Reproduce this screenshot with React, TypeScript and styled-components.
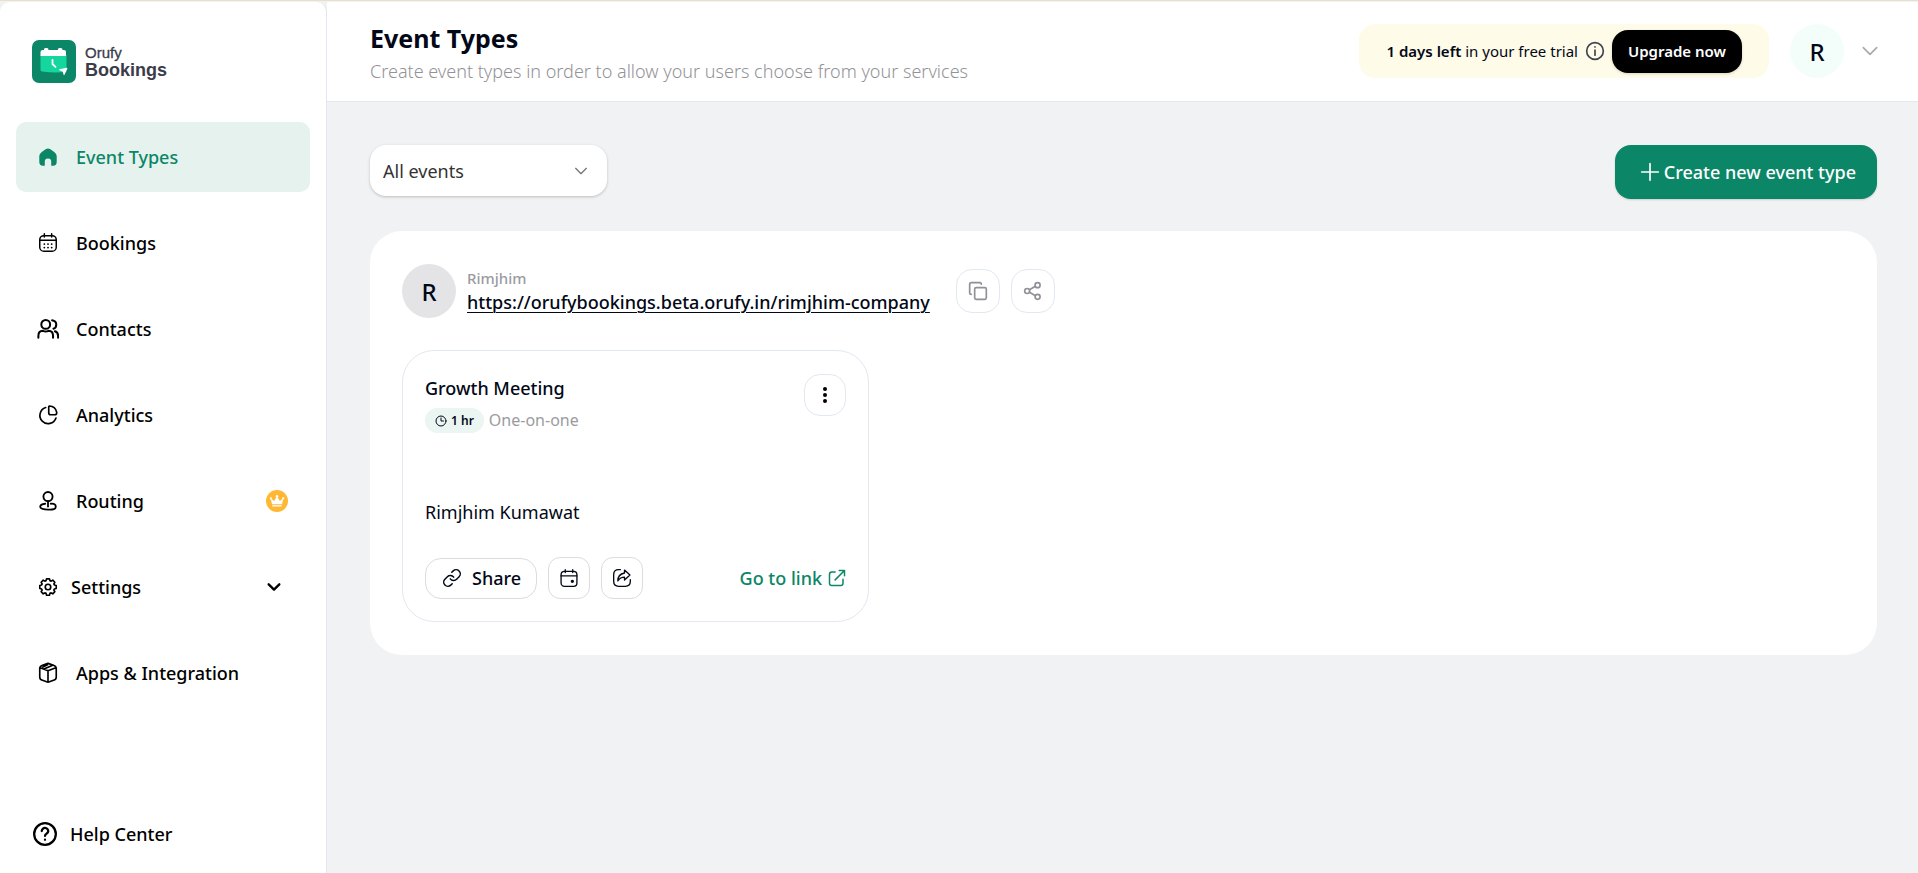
import React from "react";
import styled, { createGlobalStyle, css } from "styled-components";

const GlobalStyle = createGlobalStyle`
  *, *::before, *::after { box-sizing: border-box; }
  body {
    margin: 0;
    background: #f1f2f4;
    color: #020817;
    font-family: "Noto Sans", "Open Sans", sans-serif;
  }
  button, select { font: inherit; color: inherit; cursor: pointer; }
  a { color: inherit; text-decoration: none; }
  h1, h2, p, ul { margin: 0; padding: 0; font-weight: inherit; }
  svg { display: block; flex: none; }
`;

const Page = styled.div`
  display: grid;
  grid-template-columns: 327px minmax(0, 1fr);
  min-height: 100vh;
  border-top: 1px solid #e8e0c9;
`;

const Sidebar = styled.aside`
  display: flex;
  flex-direction: column;
  margin-top: 1px;
  padding: 38px 16px 19px;
  background: #fff;
  border-right: 1px solid #e2e8f0;
  border-radius: 10px 10px 0 0;
`;

const Brand = styled.a`
  display: flex;
  align-items: center;
  gap: 9px;
  height: 44px;
  margin: 0 16px 38px;
  color: #3b3c4a;
  font-family: "Liberation Sans", Arial, sans-serif;
`;

const BrandText = styled.span`
  display: flex;
  flex-direction: column;
  font-size: 15px;
  line-height: 17px;
  padding-bottom: 1px;
  -webkit-text-stroke: 0.3px currentColor;

  strong { font-size: 18px; line-height: 18px; font-weight: 700; -webkit-text-stroke: 0; }
`;

const NavList = styled.ul`
  display: flex;
  flex-direction: column;
  gap: 16px;
  list-style: none;
`;

const navItem = css`
  display: flex;
  align-items: center;
  width: 100%;
  border: 0;
  background: none;
  color: #000;
  font-size: 18px;
  line-height: 28px;
  font-weight: 500;
  text-align: left;
`;

const NavLink = styled.a<{ $active?: boolean }>`
  ${navItem}
  gap: 17px;
  height: 70px;
  padding: 0 22px 0 21px;
  border-radius: 10px;
  ${(p) => p.$active && css`
    background: #e6f2ee;
    color: #0b8667;
  `}
`;

const NavToggle = styled.button`
  ${navItem}
  gap: 12px;
  height: 70px;
  padding: 0 28px 0 21px;
`;

const NavLabel = styled.span`
  flex: 1;
`;

const HelpLink = styled.a`
  ${navItem}
  gap: 12px;
  height: 40px;
  margin-top: auto;
  padding: 0 16px;
`;

const Main = styled.div`
  display: flex;
  flex-direction: column;
  margin-top: 1px;
`;

const Header = styled.header`
  display: flex;
  align-items: center;
  justify-content: space-between;
  gap: 24px;
  height: 100px;
  padding: 0 38px 1px 43px;
  background: #fff;
  border-bottom: 1px solid #e2e8f0;
`;

const Heading = styled.div`
  display: flex;
  flex-direction: column;
  gap: 2px;
  padding-top: 4px;
`;

const Title = styled.h1`
  font-size: 25px;
  line-height: 34px;
  font-weight: 700;
`;

const Subtitle = styled.p`
  color: #939397;
  font-size: 18px;
  line-height: 28px;
  font-weight: 300;
`;

const HeaderActions = styled.div`
  display: flex;
  align-items: center;
  flex: none;
`;

const TrialBanner = styled.div`
  display: flex;
  align-items: center;
  gap: 7px;
  height: 54px;
  margin-right: 21px;
  padding: 0 27px;
  border-radius: 16px;
  background: #fefbe8;
  font-size: 15px;
  line-height: 20px;

  strong { font-weight: 600; }
`;

const UpgradeButton = styled.button`
  height: 43px;
  padding: 0 16px;
  border: 0;
  border-radius: 16px;
  background: #000;
  color: #fff;
  font-size: 15px;
  font-weight: 600;
  box-shadow: 0 1px 3px rgba(0, 0, 0, 0.15);
`;

const Avatar = styled.span<{ $tone: string }>`
  display: flex;
  align-items: center;
  justify-content: center;
  flex: none;
  width: 54px;
  height: 54px;
  border-radius: 50%;
  background: ${(p) => p.$tone};
  font-size: 24px;
  font-weight: 500;
`;

const AccountButton = styled.button`
  display: flex;
  align-items: center;
  gap: 16px;
  padding: 0;
  border: 0;
  background: none;
`;

const Content = styled.main`
  display: flex;
  flex-direction: column;
  gap: 32px;
  padding: 43px 41px 43px 43px;
`;

const Toolbar = styled.div`
  display: flex;
  align-items: flex-start;
  justify-content: space-between;
`;

const FilterBox = styled.label`
  display: grid;
  align-items: center;
  width: 237px;
  height: 51px;
  border-radius: 16px;
  background: #fff;
  box-shadow: 0 1px 3px rgba(0, 0, 0, 0.22);

  > * { grid-area: 1 / 1; }
  > svg { justify-self: end; margin-right: 18px; pointer-events: none; }
`;

const FilterSelect = styled.select`
  width: 100%;
  height: 100%;
  padding: 0 40px 0 13px;
  border: 0;
  border-radius: 16px;
  background: transparent;
  color: #333;
  appearance: none;
  font-size: 18px;
`;

const CreateButton = styled.button`
  display: flex;
  align-items: center;
  gap: 4px;
  height: 54px;
  padding: 0 21px 0 25px;
  border: 0;
  border-radius: 16px;
  background: #0b8667;
  color: #fff;
  font-size: 18px;
  font-weight: 500;
  box-shadow: 0 1px 2px rgba(0, 0, 0, 0.15);
`;

const Panel = styled.section`
  display: flex;
  flex-direction: column;
  gap: 32px;
  padding: 33px 32px;
  border-radius: 32px;
  background: #fff;
`;

const Owner = styled.div`
  display: flex;
  align-items: center;
  gap: 11px;
`;

const OwnerText = styled.div`
  display: flex;
  flex-direction: column;
  margin-right: 15px;
  padding-bottom: 2px;
  color: #9b9b9f;
  font-size: 15px;
  line-height: 24px;
  font-weight: 500;
`;

const OwnerLink = styled.a`
  color: #020817;
  font-size: 18px;
  line-height: 24px;
  text-decoration: underline;
  text-decoration-thickness: 1px;
  text-underline-offset: 3px;
`;

const IconButton = styled.button<{ $size?: number; $gray?: boolean }>`
  display: flex;
  align-items: center;
  justify-content: center;
  flex: none;
  width: ${(p) => p.$size ?? 42}px;
  height: ${(p) => p.$size ?? 42}px;
  padding: 0;
  border: 1px solid ${(p) => (p.$gray ? "#dcdcde" : "#e2e8f0")};
  border-radius: ${(p) => (p.$gray ? 12 : 16)}px;
  background: #fff;
`;

const Card = styled.article`
  display: flex;
  flex-direction: column;
  width: 467px;
  max-width: 100%;
  padding: 23px 22px 22px;
  border: 1px solid #e2e8f0;
  border-radius: 32px;
`;

const CardHead = styled.div`
  display: flex;
  justify-content: space-between;
  align-items: flex-start;
`;

const CardTitle = styled.h2`
  font-size: 18px;
  line-height: 28px;
  font-weight: 500;
`;

const Meta = styled.div`
  display: flex;
  align-items: center;
  gap: 5px;
  margin-top: 6px;
  color: #9b9b9f;
  font-size: 16px;
  line-height: 25px;
`;

const Duration = styled.span`
  display: flex;
  align-items: center;
  gap: 4px;
  padding: 0 10px;
  border-radius: 13px;
  background: #ebf5f2;
  color: #020817;
  font-size: 12px;
  font-weight: 600;
`;

const Host = styled.p`
  margin: 65px 0 31px;
  font-size: 18px;
  line-height: 28px;
`;

const CardActions = styled.div`
  display: flex;
  align-items: center;
  gap: 11px;
`;

const ShareButton = styled.button`
  display: flex;
  align-items: center;
  gap: 10px;
  height: 41px;
  padding: 0 15px 0 16px;
  border: 1px solid #dcdcde;
  border-radius: 16px;
  background: #fff;
  font-size: 18px;
  font-weight: 500;
`;

const GoLink = styled.a`
  display: flex;
  align-items: center;
  gap: 6px;
  margin-left: auto;
  color: #0b8667;
  font-size: 18px;
  line-height: 28px;
  font-weight: 500;
`;

type IconProps = { size?: number; width?: number; color?: string; children: React.ReactNode };

const Icon = ({ size = 22, width = 2, color = "currentColor", children }: IconProps) => (
  <svg width={size} height={size} viewBox="0 0 24 24" fill="none" stroke={color} strokeWidth={width}
    strokeLinecap="round" strokeLinejoin="round" aria-hidden="true">
    {children}
  </svg>
);

const LogoMark = () => (
  <svg width="44" height="44" viewBox="0 0 44 44" aria-hidden="true">
    <rect width="44" height="43" rx="7" fill="#0b8667" />
    <path d="M8.500 15h26v16q0 1-1 1-12 1-23.500-.5-1.500-.2-1.500-2z" fill="#16d6a0" />
    <path d="M8.500 16v-4q0-2 2-2h1.500V9q0-1 2.200-1t2.200 1v1h9.600V9q0-1 2.200-1t2.200 1v1h1.600q2 0 2 2v4z" fill="#fff" />
    <path d="M20.500 20v4l3 2.800" stroke="#fff" strokeWidth="1.800" fill="none" strokeLinecap="round" />
    <path d="M27.500 29.300l7.200-1.500q1 0 .6 1l-2.800 6q-.6.800-.9-.1l-.8-3-3.300-1.500q-.8-.5 0-.9z" fill="#fff" />
  </svg>
);

const HomeIcon = () => (
  <Icon>
    <path d="M5.200 6.600l4.600-3.200q2.200-1.500 4.400 0l4.600 3.200Q21.500 8.500 21.500 11v6.500q0 4-4 4H15.500v-4.800q0-3.200-3.500-3.200t-3.500 3.200v4.800H6.500q-4 0-4-4V11q0-2.500 2.700-4.400z" fill="currentColor" stroke="none" />
  </Icon>
);

const CalendarIcon = () => (
  <Icon width={1.6}>
    <rect x="3" y="4" width="18" height="17" rx="4.500" />
    <path d="M3 9h18M8 2v3.500M16 2v3.500" />
    <path d="M8 13.200h.01M12 13.200h.01M16 13.200h.01M8 17h.01M12 17h.01M16 17h.01" strokeWidth="2" />
  </Icon>
);

const ContactsIcon = () => (
  <Icon width={2.200}>
    <circle cx="9.500" cy="7" r="4.800" />
    <path d="M1.500 21.500v-2q0-5.300 5-5.500 3 1.500 6 0 5 .2 5 5.500v2M16.500 2.500q4.500.8 4.500 4.600t-3 4.600M19.500 14.500q3.500 1 3.500 5v2" />
  </Icon>
);

const AnalyticsIcon = () => (
  <Icon width={1.800}>
    <path d="M9.500 3.800a9 9 0 1 0 11.200 11.500" />
    <path d="M13.500 2.200q6.500.2 8 6.800.3 2.700-2.200 2.700H15q-2.200 0-2.200-2.200V3q0-.8.700-.8z" />
  </Icon>
);

const RoutingIcon = () => (
  <Icon width={2}>
    <circle cx="12" cy="7.200" r="5" />
    <path d="M12 12.200V18M9 15q-5.500.6-5.500 3.200t8.500 3.200 8.500-3.200-5.500-3.200" />
  </Icon>
);

// Eight flat teeth around the hub: outer pair then inner pair per 45° step.
const gearPoints = Array.from({ length: 8 }, (_, i) =>
  [[-10, 10], [10, 10], [17, 8], [28, 8]].map(([offset, radius]) => {
    const angle = ((i * 45 + offset) * Math.PI) / 180;
    return `${(12 + radius * Math.sin(angle)).toFixed(2)},${(12 - radius * Math.cos(angle)).toFixed(2)}`;
  }).join(" ")
).join(" ");

const GearIcon = () => (
  <Icon size={20} width={2}>
    <circle cx="12" cy="12" r="3.300" />
    <polygon points={gearPoints} />
  </Icon>
);

const BoxIcon = () => (
  <Icon width={1.800}>
    <path d="M12 1.500l6 2q3 1 3 3.500v9.500q0 2.500-3 3.500l-6 2-6-2q-3-1-3-3.500V7q0-2.500 3-3.500zM3.500 6.300L12 9.500l8.500-3.200M12 9.500V22M7.500 7.700l9-4M6.500 5.500l5-2.500" />
  </Icon>
);

const HelpIcon = () => (
  <Icon size={26} width={2.100}>
    <circle cx="12" cy="12" r="10" />
    <path d="M9 9.300a3 3 0 0 1 6 .2c0 2-3 2.300-3 4.300M12 17.200v.1" />
  </Icon>
);

const CrownBadge = () => (
  <svg width="22" height="22" viewBox="0 0 22 22" role="img" aria-label="Premium">
    <circle cx="11" cy="11" r="11" fill="#ffb833" />
    <path d="M6 14.300L4.800 8.500l3.300 2.500L11 6.500l2.900 4.500 3.300-2.500L16 14.300zM6.300 15.300h9.400v1.300H6.300z" fill="#fff" />
    <circle cx="4.800" cy="8.300" r="1.100" fill="#fff" /><circle cx="11" cy="6.200" r="1.200" fill="#fff" /><circle cx="17.200" cy="8.300" r="1.100" fill="#fff" />
  </svg>
);

const Chevron = ({ size, width, color }: { size: number; width: number; color?: string }) => (
  <Icon size={size} width={width} color={color}><path d="M4 8l8 8 8-8" /></Icon>
);

const GearSlot = styled.span`
  padding: 0 1px;
`;

const App = () => (
  <>
    <GlobalStyle />
    <Page>
      <Sidebar>
        <Brand href="#">
          <LogoMark />
          <BrandText>Orufy<strong>Bookings</strong></BrandText>
        </Brand>
        <nav>
          <NavList>
            <li><NavLink href="#" $active aria-current="page"><HomeIcon /><NavLabel>Event Types</NavLabel></NavLink></li>
            <li><NavLink href="#"><CalendarIcon /><NavLabel>Bookings</NavLabel></NavLink></li>
            <li><NavLink href="#"><ContactsIcon /><NavLabel>Contacts</NavLabel></NavLink></li>
            <li><NavLink href="#"><AnalyticsIcon /><NavLabel>Analytics</NavLabel></NavLink></li>
            <li><NavLink href="#"><RoutingIcon /><NavLabel>Routing</NavLabel><CrownBadge /></NavLink></li>
            <li><NavToggle type="button"><GearSlot><GearIcon /></GearSlot><NavLabel>Settings</NavLabel><Chevron size={16} width={3.500} /></NavToggle></li>
            <li><NavLink href="#"><BoxIcon /><NavLabel>Apps &amp; Integration</NavLabel></NavLink></li>
          </NavList>
        </nav>
        <HelpLink href="#"><HelpIcon />Help Center</HelpLink>
      </Sidebar>
      <Main>
        <Header>
          <Heading>
            <Title>Event Types</Title>
            <Subtitle>Create event types in order to allow your users choose from your services</Subtitle>
          </Heading>
          <HeaderActions>
            <TrialBanner>
              <span><strong>1 days left</strong> in your free trial</span>
              <Icon size={20} color="#3f4450"><circle cx="12" cy="12" r="10" /><path d="M12 11v6M12 7v.1" /></Icon>
              <UpgradeButton type="button">Upgrade now</UpgradeButton>
            </TrialBanner>
            <AccountButton type="button" aria-label="Account menu">
              <Avatar $tone="#f3fefa">R</Avatar>
              <Chevron size={20} width={2} color="#a9a9ac" />
            </AccountButton>
          </HeaderActions>
        </Header>
        <Content>
          <Toolbar>
            <FilterBox>
              <FilterSelect aria-label="Filter events" defaultValue="all">
                <option value="all">All events</option>
              </FilterSelect>
              <Chevron size={16} width={2} color="#777" />
            </FilterBox>
            <CreateButton type="button">
              <Icon size={20}><path d="M12 2v20M2 12h20" /></Icon>
              Create new event type
            </CreateButton>
          </Toolbar>
          <Panel>
            <Owner>
              <Avatar $tone="#e4e4e7">R</Avatar>
              <OwnerText>
                Rimjhim
                <OwnerLink href="#">https://orufybookings.beta.orufy.in/rimjhim-company</OwnerLink>
              </OwnerText>
              <IconButton type="button" aria-label="Copy link" $size={44}>
                <Icon color="#909096" size={20}>
                  <rect x="8" y="8" width="14" height="14" rx="1.800" />
                  <path d="M4 16q-2 0-2-2V4q0-2 2-2h10q2 0 2 2" />
                </Icon>
              </IconButton>
              <IconButton type="button" aria-label="Share page" $size={44}>
                <Icon color="#909096" size={20}>
                  <circle cx="17.500" cy="5" r="3" /><circle cx="5" cy="12" r="3" /><circle cx="17.500" cy="19" r="3" />
                  <path d="M7.800 10.400l7-4M7.800 13.600l7 4" />
                </Icon>
              </IconButton>
            </Owner>
            <Card>
              <CardHead>
                <div>
                  <CardTitle>Growth Meeting</CardTitle>
                  <Meta>
                    <Duration>
                      <Icon size={12}><circle cx="12" cy="12" r="10" /><path d="M12 6v6h5" /></Icon>
                      1 hr
                    </Duration>
                    One-on-one
                  </Meta>
                </div>
                <IconButton type="button" aria-label="More options">
                  <svg width="4" height="16" viewBox="0 0 4 16" aria-hidden="true">
                    <circle cx="2" cy="2" r="2" /><circle cx="2" cy="8" r="2" /><circle cx="2" cy="14" r="2" />
                  </svg>
                </IconButton>
              </CardHead>
              <Host>Rimjhim Kumawat</Host>
              <CardActions>
                <ShareButton type="button">
                  <Icon size={20} width={1.800}>
                    <path d="M10 13a5 5 0 0 0 7.540.54l3-3a5 5 0 0 0-7.070-7.070l-1.720 1.710" />
                    <path d="M14 11a5 5 0 0 0-7.540-.54l-3 3a5 5 0 0 0 7.070 7.070l1.710-1.710" />
                  </Icon>
                  Share
                </ShareButton>
                <IconButton type="button" aria-label="Add to calendar" $gray>
                  <Icon size={20} width={1.600}>
                    <rect x="2.500" y="4" width="19" height="18" rx="4" />
                    <path d="M2.500 9.500h19M7.500 2v3.500M16.500 2v3.500" />
                    <circle cx="16" cy="16" r="1.200" fill="currentColor" />
                  </Icon>
                </IconButton>
                <IconButton type="button" aria-label="Send event" $gray>
                  <Icon size={20} width={1.600}>
                    <path d="M10 2H8Q2 2 2 8v8q0 6 6 6h8q6 0 6-6v-2" />
                    <path d="M15 2.500l6.500 6-6.500 6v-3.500q-5 0-8 4.500 0-8 8-9.500z" />
                  </Icon>
                </IconButton>
                <GoLink href="#">
                  Go to link
                  <Icon size={18}><path d="M9.500 4H5Q2 4 2 7v12q0 3 3 3h12q3 0 3-3v-5.500M9.500 14.500L22 2M15 2h7v7" /></Icon>
                </GoLink>
              </CardActions>
            </Card>
          </Panel>
        </Content>
      </Main>
    </Page>
  </>
);

export default App;
